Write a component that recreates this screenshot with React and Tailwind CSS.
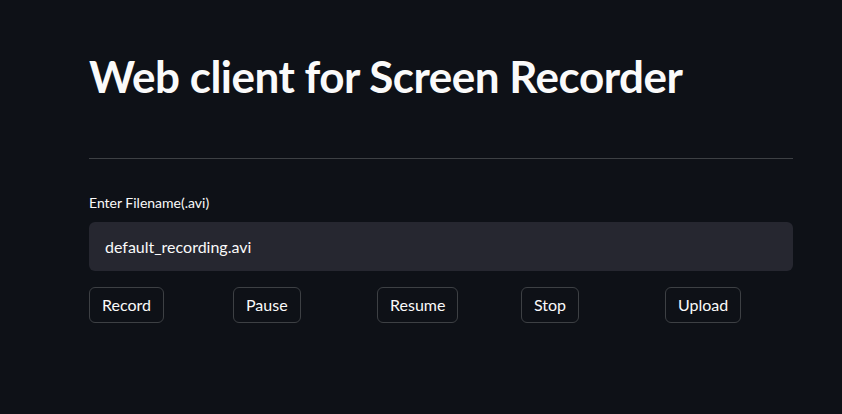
export default function App() {
  const buttons = ["Record", "Pause", "Resume", "Stop", "Upload"];

  return (
    <div
      className="min-h-screen w-full bg-[#0e1117] text-[#fafafa]"
      style={{ fontFamily: 'Lato, "Noto Sans", sans-serif' }}
    >
      <div className="w-[704px] ml-[89px] pt-[50px]">
        <h1 className="text-[44px] font-bold leading-[52px] tracking-[-0.5px] text-[#fafafa]">
          Web client for Screen Recorder
        </h1>

        <hr className="mt-[56px] border-0 border-t border-[#3d4044]" />

        <label className="block mt-[34px] text-[14px] leading-[20px] text-[#fafafa]">
          Enter Filename(.avi)
        </label>

        <div className="mt-[9px] h-[49px] rounded-[6px] bg-[#262730] flex items-center px-[16px]">
          <input
            className="w-full bg-transparent outline-none text-[16px] text-[#fafafa]"
            defaultValue="default_recording.avi"
          />
        </div>

        <div className="mt-[16px] grid grid-cols-5 gap-4">
          {buttons.map((label) => (
            <div key={label}>
              <button className="h-[36px] px-[12px] rounded-[6px] border border-[#3d4044] bg-[#0e1117] text-[16px] text-[#fafafa]">
                {label}
              </button>
            </div>
          ))}
        </div>
      </div>
    </div>
  );
}
